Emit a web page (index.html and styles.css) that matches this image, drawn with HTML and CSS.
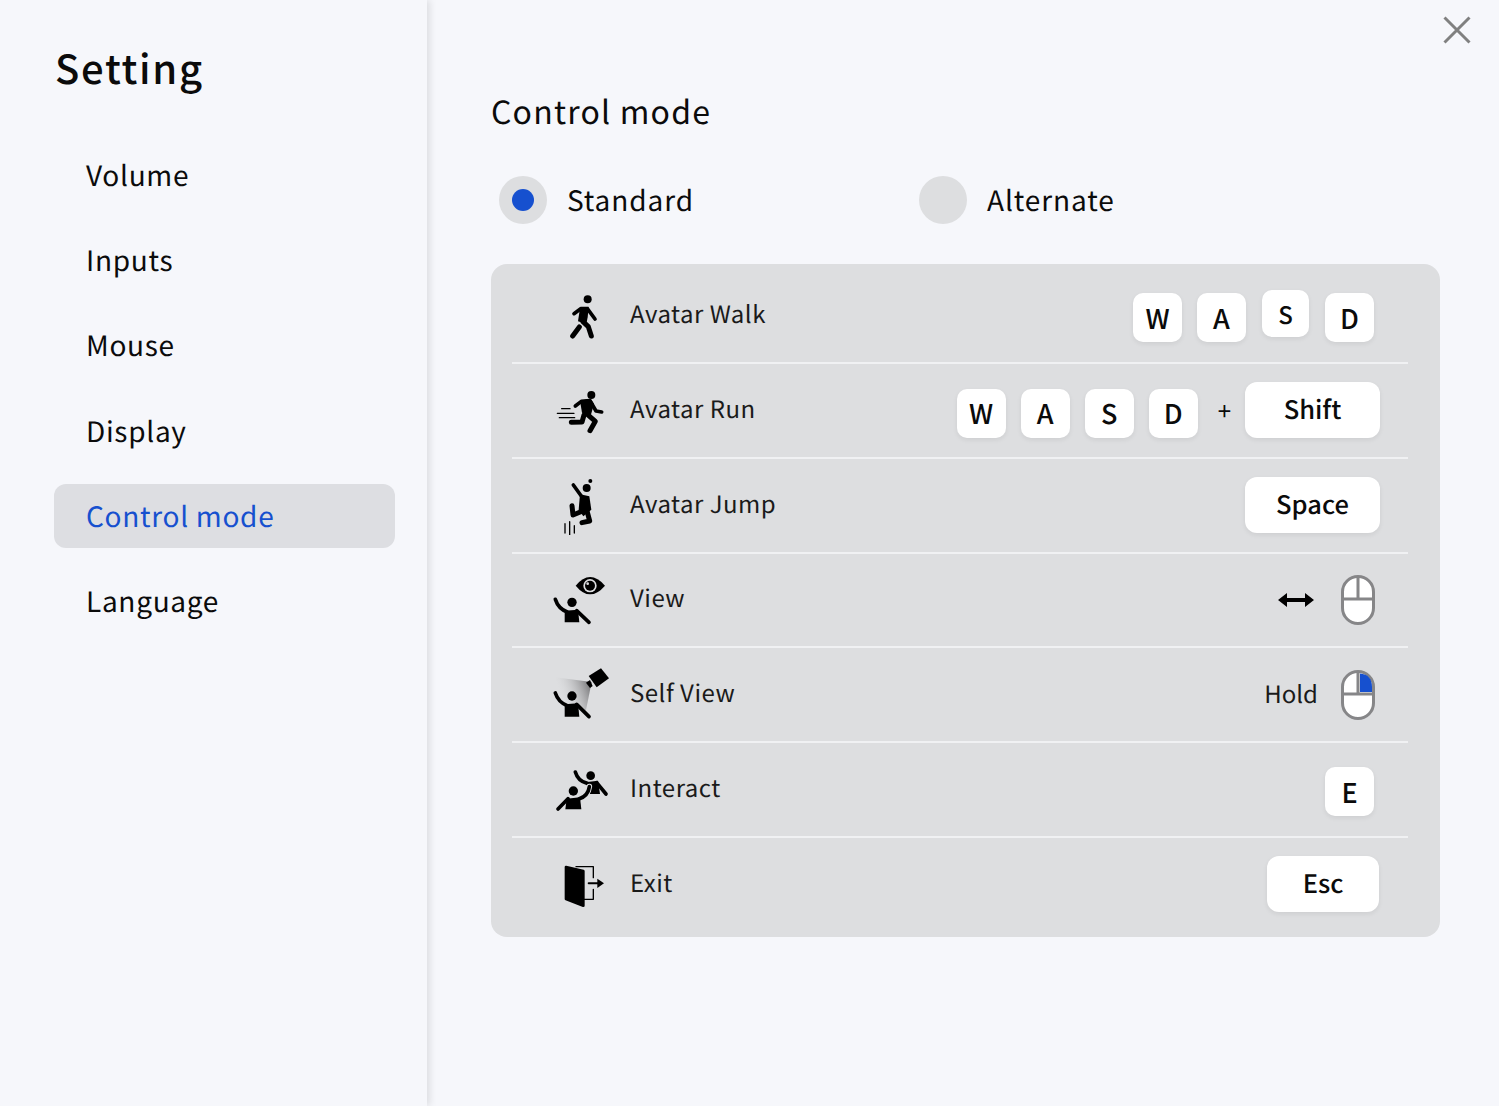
FILE: index.html
```html
<!DOCTYPE html>
<html lang="en">

<head>
	<meta charset="UTF-8">
	<title>Setting</title>
	<link rel="stylesheet" href="styles.css">
</head>

<body>
	<aside class="side">
		<h1 class="side-title">Setting</h1>
		<ul class="side-menu">
			<li class="side-item">Volume</li>
			<li class="side-item">Inputs</li>
			<li class="side-item">Mouse</li>
			<li class="side-item">Display</li>
			<li class="side-item side-item-active">Control mode</li>
			<li class="side-item">Language</li>
		</ul>
	</aside>

	<main class="main">
		<svg class="close" viewBox="0 0 28 28">
			<path d="M1.5 1.5L26.5 26.5M26.5 1.5L1.5 26.5" />
		</svg>

		<h2 class="main-title">Control mode</h2>

		<div class="mode">
			<label class="mode-item">
				<span class="radio"><span class="radio-dot"></span></span>Standard
			</label>
			<label class="mode-item">
				<span class="radio"></span>Alternate
			</label>
		</div>

		<div class="panel">
			<div class="row row-walk">
				<svg class="row-icon" viewBox="30 18 180 180">
					<circle cx="143" cy="58" r="12" />
					<path class="fill" d="M120 84L146 80L143 112L139 132L114 124Z" />
					<path class="line" d="M102 101L122 86L142 86L165 117" />
					<path class="line line-thick" d="M128 124L145 140L154 168" />
					<path class="line line-thick" d="M118 141L98 168" />
				</svg>
				<span class="row-label">Avatar Walk</span>
				<div class="keys">
					<span class="key">W</span>
					<span class="key">A</span>
					<span class="key key-small">S</span>
					<span class="key">D</span>
				</div>
			</div>

			<div class="row row-run">
				<svg class="row-icon" viewBox="30 303 180 180">
					<circle cx="154" cy="345" r="12" />
					<path class="fill" d="M120 362L152 356L162 372L152 407L126 398Z" />
					<path class="line" d="M106 378L124 364L150 362L168 393L185 396" />
					<path class="line line-thick" d="M136 398L166 424L150 452" />
					<path class="line line-thick" d="M132 405L126 426L94 427" />
					<path class="line line-thin" d="M65 386H90M52 400H102M58 413H104" />
				</svg>
				<span class="row-label">Avatar Run</span>
				<div class="keys keys-shift">
					<span class="key">W</span>
					<span class="key">A</span>
					<span class="key">S</span>
					<span class="key">D</span>
					<span class="plus">+</span>
					<span class="key key-wide key-shift">Shift</span>
				</div>
			</div>

			<div class="row row-jump">
				<svg class="row-icon" viewBox="30 586 180 180">
					<circle cx="140" cy="625" r="12" />
					<circle cx="151" cy="604" r="6" />
					<path class="line" d="M100 616L126 652" />
					<path class="fill" d="M120 644L148 650L154 690L130 710L116 690Z" />
					<path class="line line-thick" d="M96 678L99 706L128 694" />
					<path class="line line-thick" d="M140 690L149 724L126 729" />
					<path class="line line-thin" d="M75 732V760M89 726V766M103 738V760" />
				</svg>
				<span class="row-label">Avatar Jump</span>
				<div class="keys">
					<span class="key key-wide">Space</span>
				</div>
			</div>

			<div class="row row-view">
				<svg class="row-icon" viewBox="30 30 180 180">
					<path class="fill" d="M107 77Q150 25 195 77Q150 129 107 77Z" />
					<circle class="ring" cx="150" cy="77" r="20" />
					<circle cx="150" cy="77" r="15" />
					<circle class="ring" cx="143" cy="71" r="4" />
					<circle cx="96" cy="127" r="14" />
					<path class="fill" d="M74 152L114 149L118 187H74Z" />
					<path class="line" d="M46 118Q55 146 82 156" />
					<path class="line" d="M110 152L147 187" />
				</svg>
				<span class="row-label">View</span>
				<div class="keys keys-mouse">
					<svg class="arrow" viewBox="0 0 36 16">
						<path d="M0 8L9 1V6H27V1L36 8L27 15V10H9V15Z" />
					</svg>
					<svg class="mouse" viewBox="0 0 34 50">
						<rect class="mouse-body" x="1.5" y="1.5" width="31" height="47" rx="15.5" />
						<path class="mouse-line" d="M1.5 24H32.5M17 1.5V24" />
					</svg>
				</div>
			</div>

			<div class="row row-self">
				<svg class="row-icon" viewBox="30 315 180 180">
					<defs>
						<linearGradient id="beam" x1="1" y1="0.2" x2="0.1" y2="0.5">
							<stop offset="0" stop-color="#6e6e70" />
							<stop offset="1" stop-color="#dddee0" stop-opacity="0" />
						</linearGradient>
					</defs>
					<path d="M45 352L155 366L138 450L70 440Z" fill="url(#beam)" />
					<path class="fill" d="M146 348L183 325L207 355L170 382Z" />
					<path class="fill" d="M138 368L150 360L158 378L150 384Z" />
					<circle cx="96" cy="408" r="14" />
					<path class="fill" d="M74 433L114 430L118 470H74Z" />
					<path class="line" d="M46 399Q55 427 82 437" />
					<path class="line" d="M110 433L147 470" />
				</svg>
				<span class="row-label">Self View</span>
				<div class="keys keys-mouse">
					<span class="hold">Hold</span>
					<svg class="mouse" viewBox="0 0 34 50">
						<rect class="mouse-body" x="1.5" y="1.5" width="31" height="47" rx="15.5" />
						<path class="mouse-blue" d="M19 3.5Q31 4.5 31 17V22H19Z" />
						<path class="mouse-line" d="M1.5 24H32.5M17 1.5V24" />
					</svg>
				</div>
			</div>

			<div class="row row-interact">
				<svg class="row-icon" viewBox="30 597 180 180">
					<circle cx="152" cy="647" r="13" />
					<path class="line" d="M106 636Q114 664 142 670" />
					<path class="fill" d="M142 666L174 662L180 702H150Z" />
					<path class="line" d="M170 668L198 702" />
					<circle cx="100" cy="693" r="14" />
					<path class="line line-halo" d="M118 716Q144 708 148 680" />
					<path class="fill" d="M80 716L120 712L124 748H76Z" />
					<path class="line" d="M118 716Q144 708 148 680" />
					<path class="line" d="M84 716L54 747" />
				</svg>
				<span class="row-label">Interact</span>
				<div class="keys">
					<span class="key">E</span>
				</div>
			</div>

			<div class="row row-exit">
				<svg class="row-icon" viewBox="30 882 180 180">
					<path class="door" d="M78 918L130 930V1034L78 1014Z" />
					<path class="line line-thin" d="M108 917H160V950M160 985V1015H132" />
					<path class="line line-arrow" d="M146 967H176" />
					<path class="fill" d="M172 953L192 967L172 981Z" />
				</svg>
				<span class="row-label">Exit</span>
				<div class="keys">
					<span class="key key-esc">Esc</span>
				</div>
			</div>
		</div>
	</main>
</body>

</html>
```

FILE: styles.css
```css
* {
	margin: 0;
	padding: 0;
	box-sizing: border-box;
	font-family: 'Noto Sans CJK JP', 'Noto Sans', sans-serif;
	text-rendering: geometricPrecision;
}

body {
	display: flex;
	height: 1106px;
	overflow: hidden;
	background: #f6f7fb;
	color: #0b0b0b;
}

.side {
	flex: none;
	width: 427px;
	padding: 36px 32px 0 54px;
	box-shadow: 3px 0 7px rgba(0, 0, 0, .1);
	background: #f6f7fb;
}

.side-title {
	padding-left: 1px;
	font-size: 40px;
	line-height: 62px;
	font-weight: 500;
	letter-spacing: 1.7px;
}

.side-menu {
	list-style: none;
	margin-top: 45px;
}

.side-item {
	height: 64px;
	margin-bottom: 21.2px;
	padding-left: 32px;
	border-radius: 12px;
	font-size: 28px;
	line-height: 64px;
	letter-spacing: .7px;
}

.side-item-active {
	background: #dddee2;
	color: #1650cf;
}

.main {
	position: relative;
	flex: 1;
	padding: 87px 59px 0 65px;
}

.close {
	position: absolute;
	top: 16px;
	right: 28px;
	width: 28px;
	height: 28px;
	fill: none;
	stroke: #808080;
	stroke-width: 3;
}

.main-title {
	font-size: 32px;
	line-height: 48px;
	font-weight: 400;
	letter-spacing: 1.2px;
	margin-left: -1px;
}

.mode {
	display: flex;
	margin: 41px 0 0 -1px;
	padding-left: 8px;
}

.mode-item {
	display: flex;
	align-items: center;
	width: 420px;
	height: 48px;
	font-size: 28px;
	line-height: 46px;
	letter-spacing: .9px;
}

.radio {
	display: flex;
	align-items: center;
	justify-content: center;
	width: 48px;
	height: 48px;
	margin-right: 20px;
	border-radius: 50%;
	background: #dddee0;
}

.radio-dot {
	width: 22px;
	height: 22px;
	border-radius: 50%;
	background: #1650cf;
}

.panel {
	margin: 40px 0 0 -1px;
	height: 673px;
	padding: 5.5px 32px 0 21px;
	border-radius: 16px;
	background: #dddee0;
}

.row {
	display: flex;
	align-items: center;
	height: 94.7px;
	border-bottom: 2px solid #f0f1f3;
}

.row-exit {
	border-bottom: 0;
}

.row-icon {
	flex: none;
	width: 60px;
	height: 60px;
	margin-left: 38px;
	margin-right: 20px;
}

.row-icon .fill {
	fill: #000;
}

.row-icon .line {
	fill: none;
	stroke: #000;
	stroke-width: 11;
	stroke-linecap: round;
	stroke-linejoin: round;
}

.row-icon .line-thick {
	stroke-width: 15;
}

.row-icon .line-thin {
	stroke-width: 4;
}

.row-icon .line-arrow {
	stroke-width: 6;
}

.row-icon .line-halo {
	stroke: #dddee0;
	stroke-width: 17;
}

.row-icon .ring {
	fill: #dddee0;
}

.row-icon .door {
	fill: #000;
	stroke: #000;
	stroke-width: 8;
	stroke-linejoin: round;
}

.row-label {
	font-size: 24px;
	letter-spacing: .5px;
	margin-top: -6px;
	color: #1a1a1a;
}

.keys {
	display: flex;
	align-items: center;
	gap: 15px;
	margin-left: auto;
	padding-right: 34px;
}

.key {
	display: flex;
	align-items: center;
	justify-content: center;
	width: 49px;
	height: 49px;
	border-radius: 10px;
	background: #fff;
	box-shadow: 0 2px 5px rgba(0, 0, 0, .07);
	font-size: 27px;
	font-weight: 500;
}

.key-small {
	width: 47px;
	height: 47px;
	margin: 0 1px 8px;
	font-size: 24px;
}

.key-wide {
	width: 135px;
	height: 56px;
	padding-bottom: 3px;
	border-radius: 12px;
	font-size: 25.5px;
}

.key-esc {
	width: 112px;
	height: 56px;
	padding-bottom: 3px;
	border-radius: 12px;
	font-size: 25.5px;
}

.row-walk .keys {
	margin-top: 4px;
}

.row-run .keys {
	padding-right: 28px;
	margin-top: -2px;
}

.row-jump .keys {
	padding-right: 28px;
}

.row-run .key:not(.key-wide) {
	margin-top: 7px;
	padding-bottom: 2px;
}

.key-shift {
	margin-left: 6px;
}

.plus {
	font-size: 24px;
	margin: 0 -7px 0 5px;
}

.row-interact .keys {
	margin-top: 4px;
}

.row-exit .keys {
	margin-top: -1px;
	padding-right: 29px;
}

.keys-mouse {
	gap: 27px;
	padding-right: 33px;
}

.arrow {
	width: 36px;
	height: 16px;
	fill: #000;
}

.mouse {
	width: 34px;
	height: 50px;
}

.mouse-body {
	fill: #fff;
	stroke: #868688;
	stroke-width: 3;
}

.mouse-line {
	fill: none;
	stroke: #868688;
	stroke-width: 3;
}

.mouse-blue {
	fill: #1650cf;
}

.hold {
	font-size: 24px;
	color: #1a1a1a;
	margin-right: -4px;
	margin-top: -5px;
}
```
